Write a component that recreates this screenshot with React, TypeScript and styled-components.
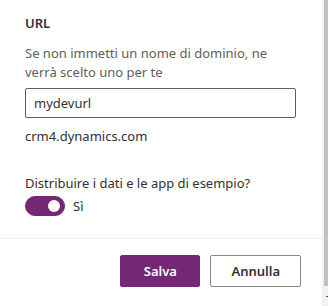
import styled, { createGlobalStyle } from 'styled-components';

const GlobalStyle = createGlobalStyle`
    body {
        margin: 0;
        background: #ffffff;
        font-family: 'Noto Sans', 'Open Sans', sans-serif;
        color: #323130;
    }
`;

const App = () => {
    return (
        <>
            <GlobalStyle />
            <StyledFrame>
                <StyledPanel>
                    <StyledBody>
                        <StyledLabel>URL</StyledLabel>
                        <StyledHint>Se non immetti un nome di dominio, ne verrà scelto uno per te</StyledHint>
                        <StyledInput defaultValue="mydevurl" />
                        <StyledSuffix>crm4.dynamics.com</StyledSuffix>
                        <StyledQuestion>Distribuire i dati e le app di esempio?</StyledQuestion>
                        <StyledToggleRow>
                            <StyledToggle $on>
                                <span />
                            </StyledToggle>
                            <StyledToggleText>Sì</StyledToggleText>
                        </StyledToggleRow>
                    </StyledBody>
                    <StyledFooter>
                        <StyledButton $primary>Salva</StyledButton>
                        <StyledButton>Annulla</StyledButton>
                    </StyledFooter>
                </StyledPanel>
                <StyledScrollbar>
                    <StyledThumb />
                    <StyledArrow />
                </StyledScrollbar>
            </StyledFrame>
        </>
    );
};

const StyledFrame = styled.div`
    display: flex;
    width: 328px;
    height: 306px;
    overflow: hidden;
    background: #ffffff;
`;

const StyledPanel = styled.div`
    flex: 1;
    display: flex;
    flex-direction: column;
`;

const StyledBody = styled.div`
    display: flex;
    flex-direction: column;
    padding: 13px 26px 22px 25px;
`;

const StyledLabel = styled.label`
    font-size: 13px;
    font-weight: 600;
    line-height: 20px;
    color: #323130;
`;

const StyledHint = styled.p`
    margin: 11px 0 0;
    font-size: 13px;
    line-height: 19px;
    color: #605e5c;
`;

const StyledInput = styled.input`
    box-sizing: border-box;
    width: 271px;
    height: 30px;
    margin-top: 6px;
    padding: 0 8px;
    border: 1px solid #605e5c;
    border-radius: 2px;
    outline: none;
    font-family: inherit;
    font-size: 13px;
    color: #323130;
`;

const StyledSuffix = styled.div`
    margin-top: 8px;
    font-size: 13px;
    line-height: 20px;
    color: #323130;
`;

const StyledQuestion = styled.div`
    margin-top: 27px;
    font-size: 13px;
    line-height: 20px;
    color: #323130;
`;

const StyledToggleRow = styled.div`
    display: flex;
    align-items: center;
    gap: 8px;
    margin-top: 3px;
`;

const StyledToggle = styled.div<{ $on?: boolean }>`
    position: relative;
    box-sizing: border-box;
    width: 40px;
    height: 20px;
    border-radius: 10px;
    background: ${({ $on }) => ($on ? '#742774' : '#ffffff')};
    border: 1px solid ${({ $on }) => ($on ? '#742774' : '#605e5c')};

    span {
        position: absolute;
        top: 3px;
        left: ${({ $on }) => ($on ? '22px' : '3px')};
        width: 12px;
        height: 12px;
        border-radius: 50%;
        background: ${({ $on }) => ($on ? '#ffffff' : '#605e5c')};
    }
`;

const StyledToggleText = styled.span`
    font-size: 13px;
    line-height: 20px;
    color: #323130;
`;

const StyledFooter = styled.div`
    display: flex;
    justify-content: flex-end;
    gap: 10px;
    padding: 16px 21px 0 0;
    border-top: 1px solid #edebe9;
`;

const StyledButton = styled.button<{ $primary?: boolean }>`
    box-sizing: border-box;
    min-width: 80px;
    height: 32px;
    padding: 0 20px;
    border-radius: 2px;
    border: 1px solid ${({ $primary }) => ($primary ? '#742774' : '#8a8886')};
    background: ${({ $primary }) => ($primary ? '#742774' : '#ffffff')};
    color: ${({ $primary }) => ($primary ? '#ffffff' : '#323130')};
    font-family: inherit;
    font-size: 13px;
    font-weight: 600;
`;

const StyledScrollbar = styled.div`
    position: relative;
    width: 6px;
    background: #f0f0f0;
`;

const StyledThumb = styled.div`
    width: 4px;
    height: 286px;
    margin-left: 2px;
    background: #c2c2c2;
`;

const StyledArrow = styled.div`
    width: 2px;
    height: 1px;
    margin: 10px 0 0 4px;
    background: #505050;
`;

export default App;
